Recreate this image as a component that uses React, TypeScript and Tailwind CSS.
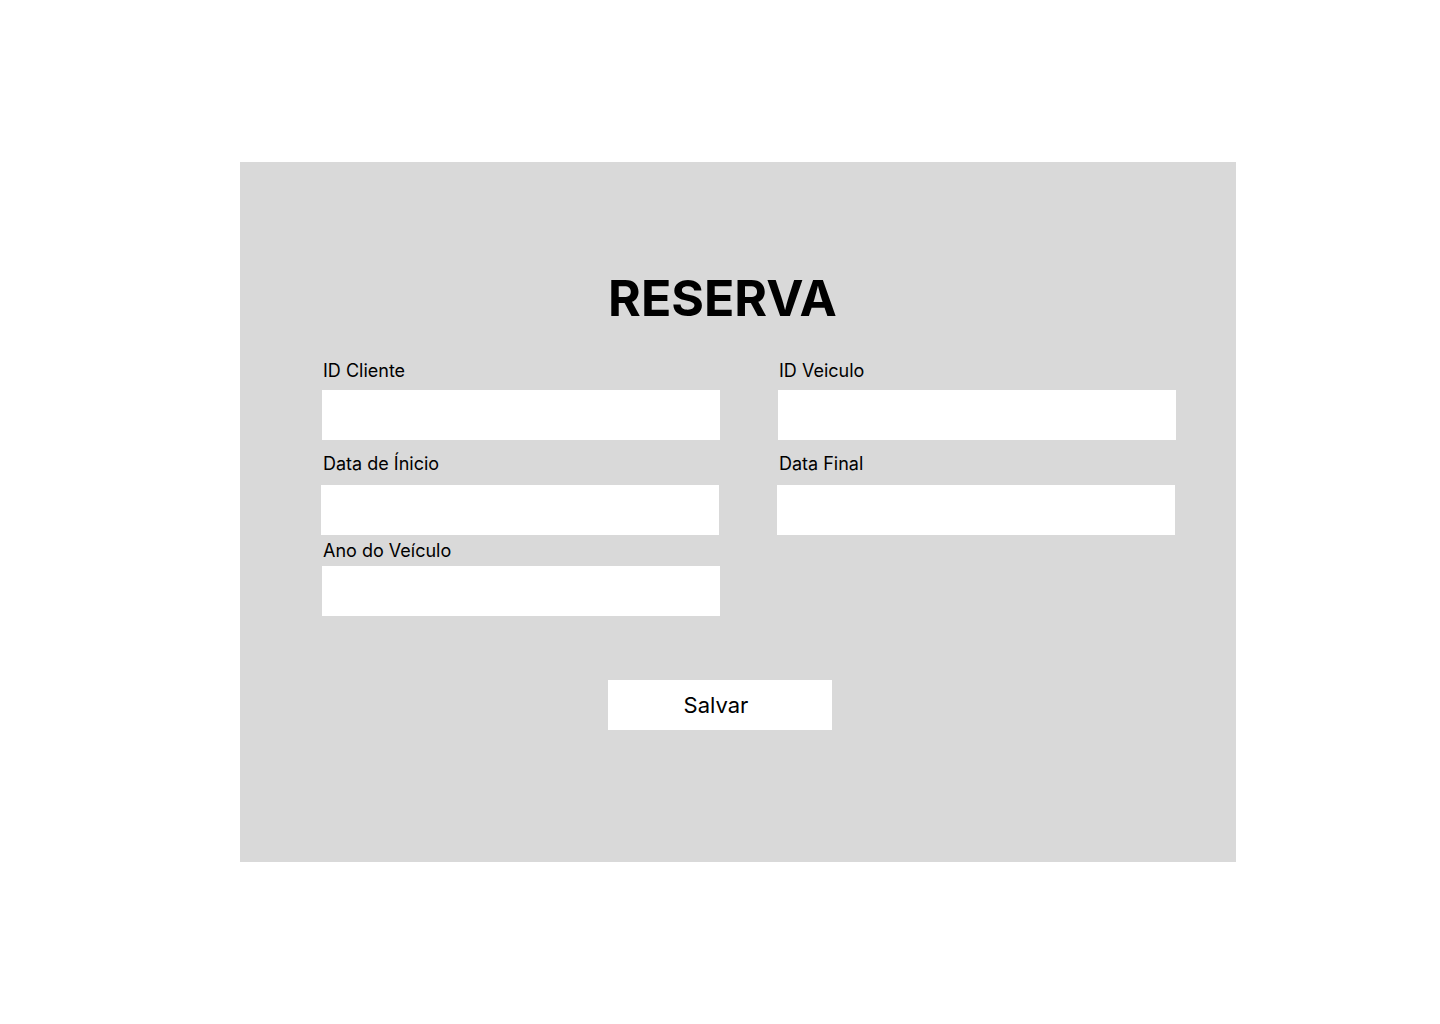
import React from "react";

export default function App() {
  const font = { fontFamily: "Inter, 'Noto Sans', sans-serif" };
  return (
    <div className="min-h-[1024px] w-[1440px] bg-white pt-[162px]" style={font}>
      <div className="ml-[240px] flex h-[700px] w-[996px] flex-col bg-[#d9d9d9]">
        <h1 className="mt-[111px] w-[965px] text-center text-[50px] font-bold leading-[50px] text-black">
          RESERVA
        </h1>

        {/* Row 1 */}
        <div className="ml-[82px] mt-[37px] grid grid-cols-[398px_398px] gap-x-[58px]">
          <div className="flex flex-col">
            <label className="ml-px h-[22px] text-[18px] leading-[22px] text-black">ID Cliente</label>
            <div className="mt-[8px] h-[50px] bg-white" />
          </div>
          <div className="flex flex-col">
            <label className="ml-px h-[22px] text-[18px] leading-[22px] text-black">ID Veiculo</label>
            <div className="mt-[8px] h-[50px] bg-white" />
          </div>
        </div>

        {/* Row 2 */}
        <div className="ml-[82px] mt-[13px] grid grid-cols-[398px_398px] gap-x-[58px]">
          <div className="flex flex-col">
            <label className="ml-px h-[22px] text-[18px] leading-[22px] text-black">Data de Ínicio</label>
            <div className="-ml-px mr-px mt-[10px] h-[50px] bg-white" />
          </div>
          <div className="flex flex-col">
            <label className="ml-px h-[22px] text-[18px] leading-[22px] text-black">Data Final</label>
            <div className="-ml-px mr-px mt-[10px] h-[50px] bg-white" />
          </div>
        </div>

        {/* Row 3 */}
        <div className="ml-[82px] mt-[5px] grid grid-cols-[398px_398px] gap-x-[58px]">
          <div className="flex flex-col">
            <label className="ml-px h-[22px] text-[18px] leading-[22px] text-black">Ano do Veículo</label>
            <div className="mt-[4px] h-[50px] bg-white" />
          </div>
        </div>

        <button className="ml-[368px] mt-[64px] flex h-[50px] w-[224px] items-center justify-center bg-white pr-[8px] text-[22px] leading-[26px] text-black">
          Salvar
        </button>
      </div>
    </div>
  );
}
